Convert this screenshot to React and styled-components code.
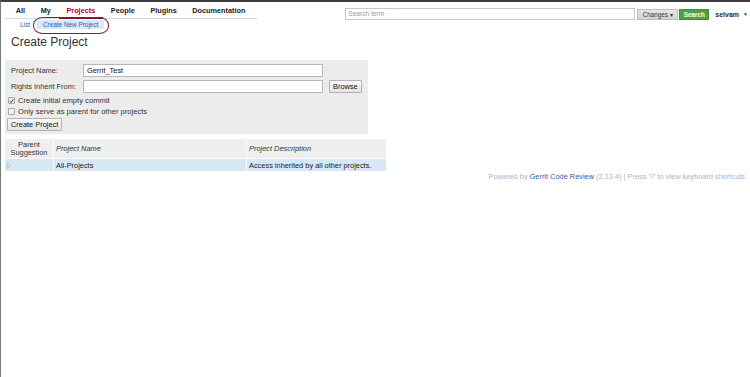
import React from "react";
import styled, { createGlobalStyle } from "styled-components";

const GlobalStyle = createGlobalStyle`
  html, body {
    margin: 0;
    padding: 0;
    background: #fff;
  }
  body {
    font-family: "Liberation Sans", Arial, sans-serif;
    font-size: 7.4px;
    color: #222;
  }
`;

/* ---------- frame ---------- */

const Frame = styled.div`
  box-sizing: border-box;
  width: 750px;
  height: 377px;
  border-top: 2px solid #3f3f3f;
  border-left: 1px solid #6f8077;
  overflow: hidden;
`;

/* ---------- top bar ---------- */

const TopBar = styled.div`
  display: flex;
  align-items: flex-start;
  justify-content: space-between;
`;

const NavColumn = styled.div`
  display: flex;
  flex-direction: column;
  padding-left: 4px;
`;

const Menu = styled.div`
  display: flex;
  width: 253px;
  padding: 4px 0 0 3px;
  box-sizing: border-box;
  border-bottom: 1px solid #dcdcdc;
`;

const MenuItem = styled.span`
  padding: 0 7.8px 2px;
  font-weight: bold;
  font-size: 7.3px;
  line-height: 9px;
  color: ${(p) => (p.$active ? "#b3001b" : "#222")};
  border-bottom: 2px solid ${(p) => (p.$active ? "#7a1030" : "transparent")};
  margin-bottom: -1px;
`;

const SubMenu = styled.div`
  display: flex;
  align-items: center;
  padding: 1px 0 0 15px;
  gap: 7px;
`;

const SubLink = styled.span`
  position: relative;
  font-size: 6.4px;
  line-height: 9px;
  color: #2a5db0;
  padding: 0 ${(p) => (p.$selected ? "6px" : "0")};
  background: ${(p) => (p.$selected ? "#dbe9f6" : "transparent")};
`;

const Circle = styled.span`
  position: absolute;
  left: -4px;
  top: -3px;
  width: 74px;
  height: 15px;
  border: 1.5px solid #8a1a46;
  border-radius: 10px / 8px;
  pointer-events: none;
`;

const SearchArea = styled.div`
  display: flex;
  align-items: center;
  padding: 6px 2px 0 0;
`;

const SearchInput = styled.div`
  box-sizing: border-box;
  width: 290px;
  height: 12px;
  border: 1px solid #c8c8c8;
  background: #fff;
  color: #9a9a9a;
  font-size: 6.6px;
  line-height: 10px;
  padding-left: 2px;
`;

const ChangesButton = styled.span`
  box-sizing: border-box;
  margin-left: 2px;
  height: 11px;
  width: 41px;
  background: linear-gradient(#e6e6e6, #d2d2d2);
  border: 1px solid #bdbdbd;
  font-size: 6.3px;
  line-height: 9px;
  text-align: center;
  color: #333;
`;

const SearchButton = styled.span`
  box-sizing: border-box;
  margin-left: 1px;
  height: 11px;
  width: 30px;
  background: #4ba33f;
  border: 1px solid #3e8f34;
  color: #fff;
  font-weight: bold;
  font-size: 6.3px;
  line-height: 9px;
  text-align: center;
`;

const User = styled.span`
  margin-left: 6px;
  font-weight: bold;
  font-size: 7px;
  color: #2b2b2b;
  display: flex;
  align-items: center;
  gap: 4px;
`;

const Caret = styled.span`
  font-size: 5px;
  font-weight: normal;
  color: #444;
`;

/* ---------- content ---------- */

const Content = styled.div`
  padding-left: 4px;
`;

const Title = styled.h1`
  margin: 5px 0 0 6px;
  font-weight: normal;
  font-size: 12px;
  line-height: 16px;
  color: #333;
`;

const FormPanel = styled.div`
  box-sizing: border-box;
  width: 363px;
  margin-top: 10px;
  padding: 3px 3px 3px 2px;
  background: #ececec;
`;

const FieldRow = styled.div`
  display: grid;
  grid-template-columns: 66px 240px auto;
  align-items: center;
  column-gap: 6px;
  height: ${(p) => p.$h || 15}px;
  padding-left: 4px;
`;

const Label = styled.span`
  color: #333;
`;

const TextBox = styled.div`
  box-sizing: border-box;
  height: 13px;
  border: 1px solid #b8b8b8;
  background: #fff;
  padding-left: 3px;
  line-height: 11px;
  color: #111;
`;

const Button = styled.span`
  box-sizing: border-box;
  display: inline-block;
  height: 13px;
  padding: 0 3px;
  border: 1px solid #b3b3b3;
  border-radius: 1px;
  background: linear-gradient(#fafafa, #e2e2e2);
  line-height: 11px;
  color: #111;
  width: fit-content;
`;

const CheckRow = styled.div`
  display: flex;
  align-items: center;
  gap: 3px;
  height: 11px;
  padding-left: 1px;
  font-size: 7.6px;
  color: #333;
`;

const CheckBox = styled.span`
  box-sizing: border-box;
  width: 7px;
  height: 7px;
  border: 1px solid #a8a8a8;
  border-radius: 1px;
  background: #f3f3f3;
  display: flex;
  align-items: center;
  justify-content: center;
`;

const ButtonRow = styled.div`
  padding: 1px 0 0 0;
`;

/* ---------- table ---------- */

const Table = styled.div`
  width: 382px;
  margin-top: 5px;
  display: grid;
  grid-template-columns: 48px 192px 139px;
  column-gap: 1px;
`;

const HeadCell = styled.div`
  background: #efefef;
  height: 19px;
  display: flex;
  align-items: center;
  justify-content: ${(p) => (p.$center ? "center" : "flex-start")};
  text-align: ${(p) => (p.$center ? "center" : "left")};
  padding-left: ${(p) => (p.$center ? "0" : "2px")};
  font-style: ${(p) => (p.$center ? "normal" : "italic")};
  line-height: 7.5px;
  color: #333;
`;

const Cell = styled.div`
  background: #d7e7f4;
  height: 12px;
  margin-top: 1px;
  display: flex;
  align-items: center;
  padding-left: 2px;
  color: #222;
`;

const Footer = styled.div`
  display: flex;
  justify-content: flex-end;
  padding: 1px 5px 0 0;
  font-size: 7.4px;
  color: #a9b3c4;
`;

const FooterLink = styled.span`
  color: #2a5db0;
  margin: 0 2px;
`;

const Check = () => (
  <svg width="6" height="6" viewBox="0 0 6 6">
    <path d="M0.8 3.1 L2.4 4.8 L5.3 0.9" fill="none" stroke="#333" strokeWidth="1.2" />
  </svg>
);

const Arrow = () => (
  <svg width="4" height="7" viewBox="0 0 4 7">
    <path d="M0.5 0.5 L3.5 3.5 L0.5 6.5 Z" fill="#e3e3e3" stroke="#a6b0bb" strokeWidth="0.6" />
  </svg>
);

export default function App() {
  const menu = ["All", "My", "Projects", "People", "Plugins", "Documentation"];
  return (
    <>
      <GlobalStyle />
      <Frame>
        <TopBar>
          <NavColumn>
            <Menu>
              {menu.map((m) => (
                <MenuItem key={m} $active={m === "Projects"}>
                  {m}
                </MenuItem>
              ))}
            </Menu>
            <SubMenu>
              <SubLink>List</SubLink>
              <SubLink $selected>
                Create New Project
                <Circle />
              </SubLink>
            </SubMenu>
          </NavColumn>
          <SearchArea>
            <SearchInput>Search term</SearchInput>
            <ChangesButton>Changes ▾</ChangesButton>
            <SearchButton>Search</SearchButton>
            <User>
              selvam <Caret>▼</Caret>
            </User>
          </SearchArea>
        </TopBar>

        <Content>
          <Title>Create Project</Title>

          <FormPanel>
            <FieldRow>
              <Label>Project Name:</Label>
              <TextBox>Gerrit_Test</TextBox>
            </FieldRow>
            <FieldRow $h={17}>
              <Label>Rights Inherit From:</Label>
              <TextBox />
              <Button>Browse</Button>
            </FieldRow>
            <CheckRow>
              <CheckBox>
                <Check />
              </CheckBox>
              Create initial empty commit
            </CheckRow>
            <CheckRow>
              <CheckBox />
              Only serve as parent for other projects
            </CheckRow>
            <ButtonRow>
              <Button>Create Project</Button>
            </ButtonRow>
          </FormPanel>

          <Table>
            <HeadCell $center>
              Parent
              <br />
              Suggestion
            </HeadCell>
            <HeadCell>Project Name</HeadCell>
            <HeadCell>Project Description</HeadCell>
            <Cell>
              <Arrow />
            </Cell>
            <Cell>All-Projects</Cell>
            <Cell>Access inherited by all other projects.</Cell>
          </Table>
        </Content>

        <Footer>
          Powered by<FooterLink>Gerrit Code Review</FooterLink>(2.13.4) | Press '?' to view keyboard shortcuts
        </Footer>
      </Frame>
    </>
  );
}
